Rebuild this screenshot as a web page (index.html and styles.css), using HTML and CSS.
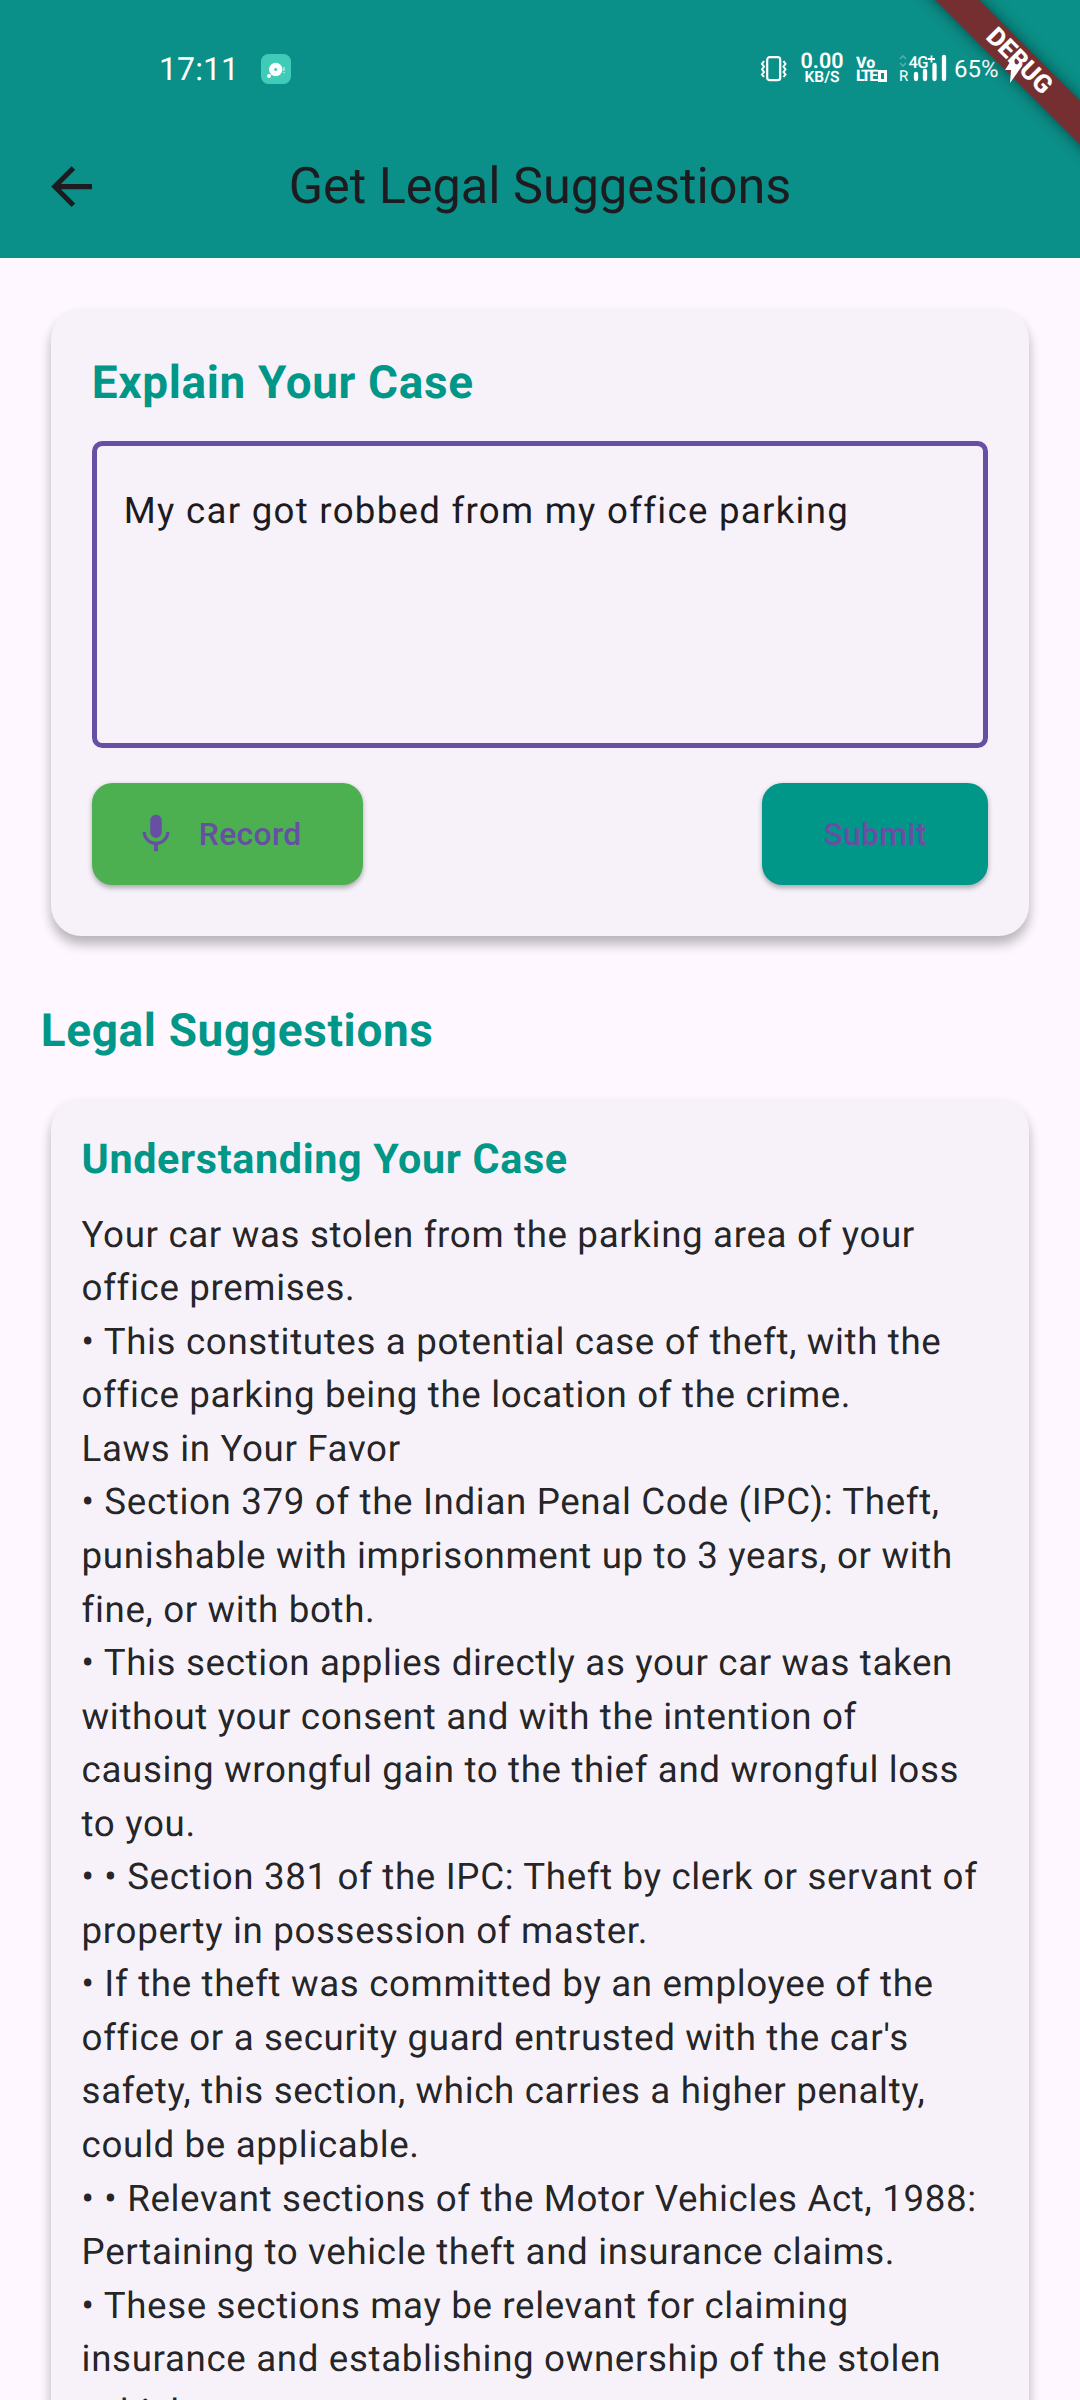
FILE: index.html
```html
<!DOCTYPE html>
<html lang="en">
<head>
<meta charset="utf-8">
<title>Get Legal Suggestions</title>
<link rel="stylesheet" href="styles.css">
</head>
<body>
<div class="screen">
  <header class="top">
    <div class="status">
      <span class="clock">17:11</span>
      <svg class="chat" viewBox="0 0 30 30"><rect width="30" height="30" rx="7.5" fill="#40cab8"/><circle cx="14.7" cy="15.5" r="6.700" fill="#fff"/><circle cx="8" cy="22" r="2" fill="#fff"/><circle cx="14.700" cy="15.500" r="1.500" fill="#40cab8"/><path d="M23 13v4M23 18v1.300" stroke="#c5f2ea" stroke-width="1.300"/></svg>
      <div class="tray">
        <svg class="vibrate" viewBox="0 0 28 26"><rect x="7.200" y="1.200" width="13" height="23" rx="2.500" fill="none" stroke="#fff" stroke-width="2.200"/><path d="M4 5 2 8 4 10.500 2 13.500 4 16 2 18.500 4 21M23.500 5 25.500 8 23.500 10.500 25.500 13.500 23.500 16 25.500 18.500 23.500 21" fill="none" stroke="#fff" stroke-width="2"/></svg>
        <div class="speed"><span class="rate">0.00</span><span class="unit">KB/S</span></div>
        <div class="volte"><span>Vo</span><span class="lte">LTE<svg viewBox="0 0 9 12"><path d="M1.500 1.500h6v9h-6z" fill="none" stroke="#fff" stroke-width="3"/></svg></span></div>
        <svg class="signal" viewBox="0 0 48 30"><path d="M1 5l3-3 3 3M1 9l3 3 3-3" fill="none" stroke="#4fb0aa" stroke-width="1.600"/><text x="0" y="27" class="sig-r">R</text><text x="9.500" y="13.500" class="sig-g">4G</text><path d="M29 5h7M32.500 1.500v7" stroke="#fff" stroke-width="1.800"/><path d="M17 20v5M26 17v8M35.500 11v14M45 3v22" stroke="#fff" stroke-width="4.300" stroke-linecap="round"/></svg>
        <span class="battery">65%</span>
      </div>
    </div>
    <div class="appbar">
      <svg class="back" viewBox="0 0 24 24"><path d="M20 11H7.830l5.590-5.590L12 4l-8 8 8 8 1.410-1.410L7.830 13H20z" fill="#1d1b20"/></svg>
      <h1 class="title">Get Legal Suggestions</h1>
    </div>
    <div class="corner"><div class="ribbon">DEBUG</div></div>
    <svg class="bolt" viewBox="0 0 20 28"><path d="M9 0 0 14h6L5 27 17 10h-7z" fill="#fff"/></svg>
  </header>
  <main class="content">
    <section class="card form">
      <h2 class="heading">Explain Your Case</h2>
      <div class="field">My car got robbed from my office parking</div>
      <div class="actions">
        <button class="btn record"><svg class="mic" viewBox="0 0 24 24"><path d="M12 14c1.660 0 3-1.340 3-3V5c0-1.660-1.340-3-3-3S9 3.340 9 5v6c0 1.660 1.340 3 3 3zM17.300 11c0 3-2.540 5.100-5.300 5.100S6.700 14 6.700 11H5c0 3.410 2.720 6.230 6 6.720V21h2v-3.280c3.280-.48 6-3.300 6-6.720z" fill="#6750a4"/></svg>Record</button>
        <button class="btn submit">Submit</button>
      </div>
    </section>
    <h2 class="heading results">Legal Suggestions</h2>
    <section class="card answer">
      <h3 class="subheading">Understanding Your Case</h3>
      <p class="body">Your car was stolen from the parking area of your<br>office premises.<br>• This constitutes a potential case of theft, with the<br>office parking being the location of the crime.<br>Laws in Your Favor<br>• Section 379 of the Indian Penal Code (IPC): Theft,<br>punishable with imprisonment up to 3 years, or with<br>fine, or with both.<br>• This section applies directly as your car was taken<br>without your consent and with the intention of<br>causing wrongful gain to the thief and wrongful loss<br>to you.<br>• • Section 381 of the IPC: Theft by clerk or servant of<br>property in possession of master.<br>• If the theft was committed by an employee of the<br>office or a security guard entrusted with the car's<br>safety, this section, which carries a higher penalty,<br>could be applicable.<br>• • Relevant sections of the Motor Vehicles Act, 1988:<br>Pertaining to vehicle theft and insurance claims.<br>• These sections may be relevant for claiming<br>insurance and establishing ownership of the stolen<br>vehicle.</p>
    </section>
  </main>
</div>
</body>
</html>
```
FILE: styles.css
```css
* { box-sizing: border-box; }
body { margin: 0; background: #fef7ff; font-family: Roboto, sans-serif; color: #1d1b20; text-rendering: geometricPrecision; }
h1, h2, h3, p { margin: 0; font-weight: 400; }
.screen { width: 1080px; height: 2400px; overflow: hidden; }
.top { position: relative; height: 257.700px; background: #0a9088; overflow: hidden; }
.status { display: flex; align-items: center; height: 114.700px; padding: 24px 0 0 159px; color: #fff; }
.clock { width: 79px; font-size: 32px; letter-spacing: .1px; line-height: 40px; white-space: nowrap; }
.chat { width: 30px; height: 30px; margin-left: 23px; }
.tray { display: flex; align-items: center; margin-left: 469px; }
.vibrate { width: 28px; height: 26px; }
.speed { display: flex; flex-direction: column; align-items: center; width: 44px; margin-left: 12px; }
.rate { font-size: 21.500px; line-height: 17px; font-weight: 600; letter-spacing: 0; }
.unit { font-size: 15.500px; line-height: 15px; font-weight: 600; }
.volte { display: flex; flex-direction: column; width: 31px; margin-left: 12px; font-size: 16px; line-height: 13.500px; font-weight: 800; }
.lte { display: flex; align-items: center; letter-spacing: -1.900px; }
.lte svg { flex: none; width: 9px; height: 12px; margin-left: 2px; }
.signal { width: 48px; height: 30px; margin-left: 12px; overflow: visible; }
.sig-r, .sig-g { fill: #fff; font-family: Roboto, sans-serif; font-size: 15px; }
.sig-g { font-size: 16.500px; font-weight: 500; letter-spacing: -.700px; }
.battery { margin-left: 7px; font-size: 24px; line-height: 28px; }
.appbar { display: grid; grid-template-columns: 142.800px 1fr 142.800px; align-items: center; height: 143px; }
.back { width: 61.200px; height: 61.200px; margin-left: 40.800px; }
.title { font-size: 50.400px; line-height: 65px; text-align: center; white-space: nowrap; }
.corner { position: absolute; top: 0; right: 0; width: 220px; height: 220px; overflow: hidden; }
.ribbon { position: absolute; left: 9.400px; top: 45.500px; width: 300px; height: 30.600px; transform: rotate(45deg); background: #752f30; box-shadow: 0 0 15px rgba(0,0,0,.5); color: #fff; font-size: 25.500px; line-height: 30.600px; font-weight: 800; text-align: center; }
.bolt { position: absolute; left: 1005px; top: 56px; width: 20px; height: 28px; }
.content { padding: 51px 40.800px 0; }
.card { margin: 0 10.200px; background: #f7f2fa; border-radius: 30.600px; box-shadow: 0 9px 12px rgba(0,0,0,.22), 0 5px 12px rgba(0,0,0,.08); }
.form { height: 627.700px; padding: 42.300px 40.800px 40.800px; }
.heading { font-size: 45.900px; line-height: 65.600px; font-weight: 700; letter-spacing: .66px; color: #009688; white-space: nowrap; }
.field { height: 306.500px; margin-top: 24.700px; padding: 37.500px 27px; border: 5.100px solid #6750a4; border-radius: 10.200px; font-size: 36.640px; line-height: 54px; letter-spacing: 1.275px; white-space: nowrap; }
.actions { display: flex; justify-content: space-between; margin-top: 35.500px; }
.btn { display: flex; align-items: center; justify-content: center; height: 102px; padding: 0 0 1px; border: 0; border-radius: 20.400px; box-shadow: 0 2.500px 5px rgba(0,0,0,.3); color: #6750a4; font: 500 31.900px/44px Roboto, sans-serif; letter-spacing: .3px; }
.record { width: 271.700px; background: #4caf50; justify-content: flex-start; padding-left: 41px; }
.mic { width: 46px; height: 46px; margin-right: 20px; }
.submit { width: 226.200px; background: #009688; }
.results { margin-top: 62.500px; }
.answer { margin-top: 34.200px; height: 1500px; padding: 32.400px 30.600px; }
.subheading { font-size: 41.300px; line-height: 58.300px; font-weight: 700; letter-spacing: .64px; color: #009688; white-space: nowrap; }
.body { margin-top: 18.400px; font-size: 36.720px; line-height: 53.550px; letter-spacing: .64px; color: rgba(0,0,0,.87); white-space: nowrap; }
```
